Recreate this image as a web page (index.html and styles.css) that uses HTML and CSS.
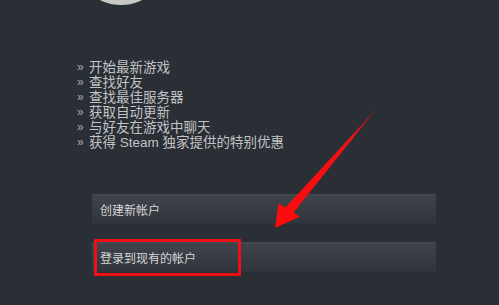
FILE: index.html
```html
<!DOCTYPE html>
<html lang="zh-CN">
<head>
<meta charset="utf-8">
<title>Steam</title>
<link rel="stylesheet" href="styles.css">
</head>
<body>
<div class="page">
  <div class="logo"></div>
  <ul class="features">
    <li><span class="bullet">»</span>开始最新游戏</li>
    <li><span class="bullet">»</span>查找好友</li>
    <li><span class="bullet">»</span>查找最佳服务器</li>
    <li><span class="bullet">»</span>获取自动更新</li>
    <li><span class="bullet">»</span>与好友在游戏中聊天</li>
    <li><span class="bullet">»</span>获得 Steam 独家提供的特别优惠</li>
  </ul>
  <div class="actions">
    <div class="btn">创建新帐户</div>
    <div class="btn">登录到现有的帐户</div>
  </div>
  <div class="highlight"></div>
  <svg class="arrow" width="499" height="305" viewBox="0 0 499 305">
    <defs>
      <linearGradient id="ag" x1="378" y1="107" x2="275" y2="228" gradientUnits="userSpaceOnUse">
        <stop offset="0" stop-color="#c0141c" stop-opacity="0.6"/>
        <stop offset="0.25" stop-color="#f01018"/>
        <stop offset="1" stop-color="#ff0a0a"/>
      </linearGradient>
    </defs>
    <polygon points="378,107 293.5,212.5 300,216.5 275,228 278.5,203.5 285.5,207.5" fill="url(#ag)"/>
  </svg>
</div>
</body>
</html>
```
FILE: styles.css
```css
html, body {
  margin: 0;
  padding: 0;
}
body {
  background: #2a2e35;
  width: 499px;
  height: 305px;
  overflow: hidden;
  font-family: "Liberation Sans", "Noto Sans CJK SC", sans-serif;
}
.page {
  position: relative;
  width: 499px;
  height: 305px;
  display: flex;
  flex-direction: column;
}
.logo {
  width: 94px;
  height: 94px;
  margin-top: -89px;
  margin-left: 74px;
  border-radius: 50%;
  background: radial-gradient(circle at 50% 40%, #d4d4d2 0%, #c6c6c4 80%, #8a8c8e 100%);
  flex: none;
}
.features {
  list-style: none;
  margin: 55px 0 0 0;
  padding: 0 0 0 77px;
  font-size: 13.5px;
  line-height: 15px;
  color: #c2c3c5;
}
.features li {
  display: flex;
  align-items: center;
  white-space: nowrap;
}
.bullet {
  width: 12px;
  font-size: 12px;
  color: #a9abae;
  flex: none;
}
.actions {
  margin: 44px 0 0 92px;
  width: 344px;
  display: flex;
  flex-direction: column;
  gap: 18px;
}
.btn {
  height: 30px;
  box-sizing: border-box;
  padding-left: 8px;
  display: flex;
  align-items: center;
  font-size: 12px;
  color: #d6d7d8;
  background: linear-gradient(to bottom, #40454d 0%, #363a41 60%, #2f333a 100%);
  box-shadow: inset 0 1px 0 #464b53;
}
.highlight {
  position: absolute;
  left: 94px;
  top: 239px;
  width: 147px;
  height: 37px;
  box-sizing: border-box;
  border: 3px solid #ee0f17;
}
.arrow {
  position: absolute;
  left: 0;
  top: 0;
}
```
